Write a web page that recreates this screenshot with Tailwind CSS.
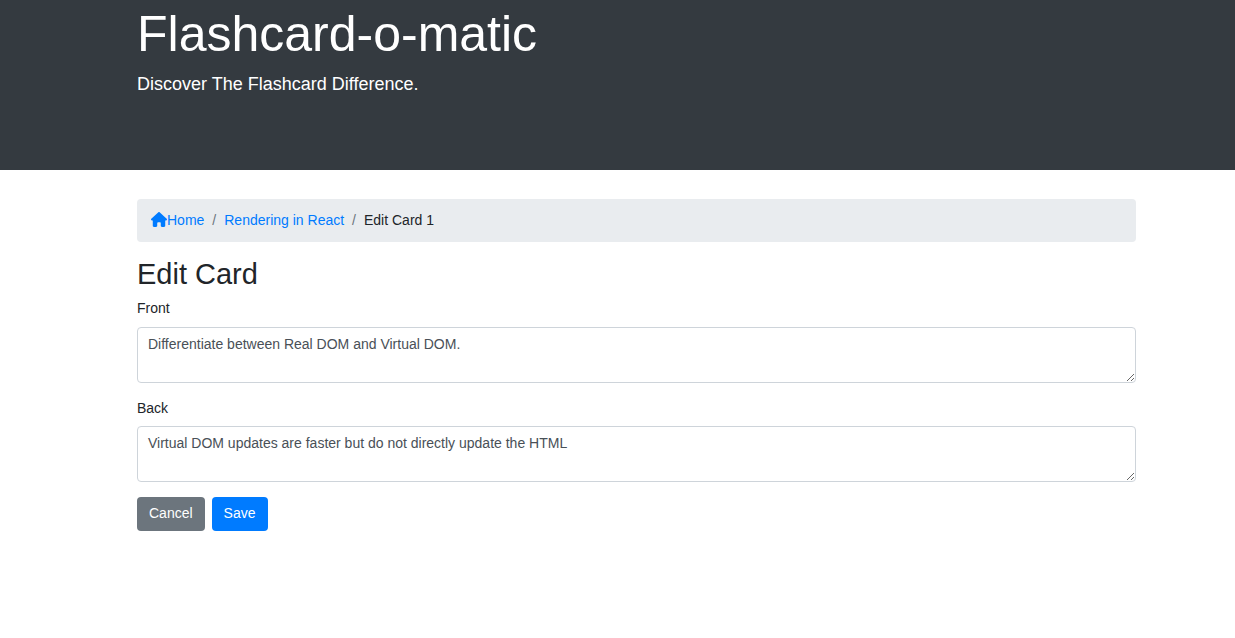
<!DOCTYPE html>
<html lang="en">
<head>
<meta charset="utf-8">
<meta name="viewport" content="width=device-width, initial-scale=1">
<title>Flashcard-o-matic</title>
<script src="https://cdn.jsdelivr.net/npm/@tailwindcss/browser@4"></script>
</head>
<body class="bg-white font-['Liberation_Sans',Arial,sans-serif] text-[14px] leading-[22px] text-[#212529]">
  <header class="bg-[#343a40] pt-1 pb-[72px] pl-[38px] text-white">
    <div class="mx-auto max-w-[999px]">
      <h1 class="mb-[7px] text-[50px] leading-[60px]">Flashcard-o-matic</h1>
      <p class="text-[18px] leading-[27px]">Discover The Flashcard Difference.</p>
    </div>
  </header>
  <main class="pt-[29px] pl-[38px]">
    <div class="mx-auto max-w-[999px]">
      <nav aria-label="Breadcrumb" class="mb-[15px] rounded-[4px] bg-[#e9ecef] px-[14px] pt-[10px] pb-[11px]">
        <ol class="flex flex-wrap gap-2">
          <li>
            <a href="#" class="flex items-center text-[#007bff] hover:underline">
              <svg class="mb-px h-[15px] w-4" viewBox="0 0 576 512" preserveAspectRatio="none" fill="currentColor" aria-hidden="true"><path d="M575.8 255.5c0 18-15 32.100-32 32.100h-32l.7 160.200c0 2.700-.2 5.400-.5 8.100V472c0 22.100-17.900 40-40 40h-16c-1.100 0-2.200 0-3.300-.1c-1.400 .1-2.800 .1-4.200 .1H392c-22.100 0-40-17.900-40-40v-88c0-17.700-14.300-32-32-32h-64c-17.700 0-32 14.300-32 32v88c0 22.100-17.900 40-40 40h-55.900c-1.500 0-3-.1-4.500-.2c-1.200 .1-2.400 .2-3.600 .2h-16c-22.100 0-40-17.900-40-40V360c0-.9 0-1.900 .1-2.800v-69.600H32c-18 0-32-14-32-32.100c0-9 3-17 10-24L266.400 8c7-7 15-8 22-8s15 2 21 7l255.400 224.500c8 7 12 15 11 24z"/></svg>Home</a>
          </li>
          <li aria-hidden="true" class="text-[#6c757d]">/</li>
          <li><a href="#" class="text-[#007bff] hover:underline">Rendering in React</a></li>
          <li aria-hidden="true" class="text-[#6c757d]">/</li>
          <li aria-current="page">Edit Card 1</li>
        </ol>
      </nav>
      <h2 class="mb-[5px] text-[29px] leading-[35px]">Edit Card</h2>
      <form>
        <div class="mb-[14px]">
          <label for="front" class="mb-2 block">Front</label>
          <textarea id="front" rows="2" class="block w-full resize rounded-[4px] border border-[#ced4da] bg-white px-[10px] py-[5px] text-[#495057]">Differentiate between Real DOM and Virtual DOM.</textarea>
        </div>
        <div class="mb-[15px]">
          <label for="back" class="mb-[7px] block">Back</label>
          <textarea id="back" rows="2" class="block w-full resize rounded-[4px] border border-[#ced4da] bg-white px-[10px] py-[5px] text-[#495057]">Virtual DOM updates are faster but do not directly update the HTML</textarea>
        </div>
        <div class="flex gap-[7px]">
          <button type="button" class="rounded-[4px] bg-[#6c757d] px-3 pt-[5px] pb-[7px] text-white">Cancel</button>
          <button type="submit" class="rounded-[4px] bg-[#007bff] px-3 pt-[5px] pb-[7px] text-white">Save</button>
        </div>
      </form>
    </div>
  </main>
</body>
</html>
